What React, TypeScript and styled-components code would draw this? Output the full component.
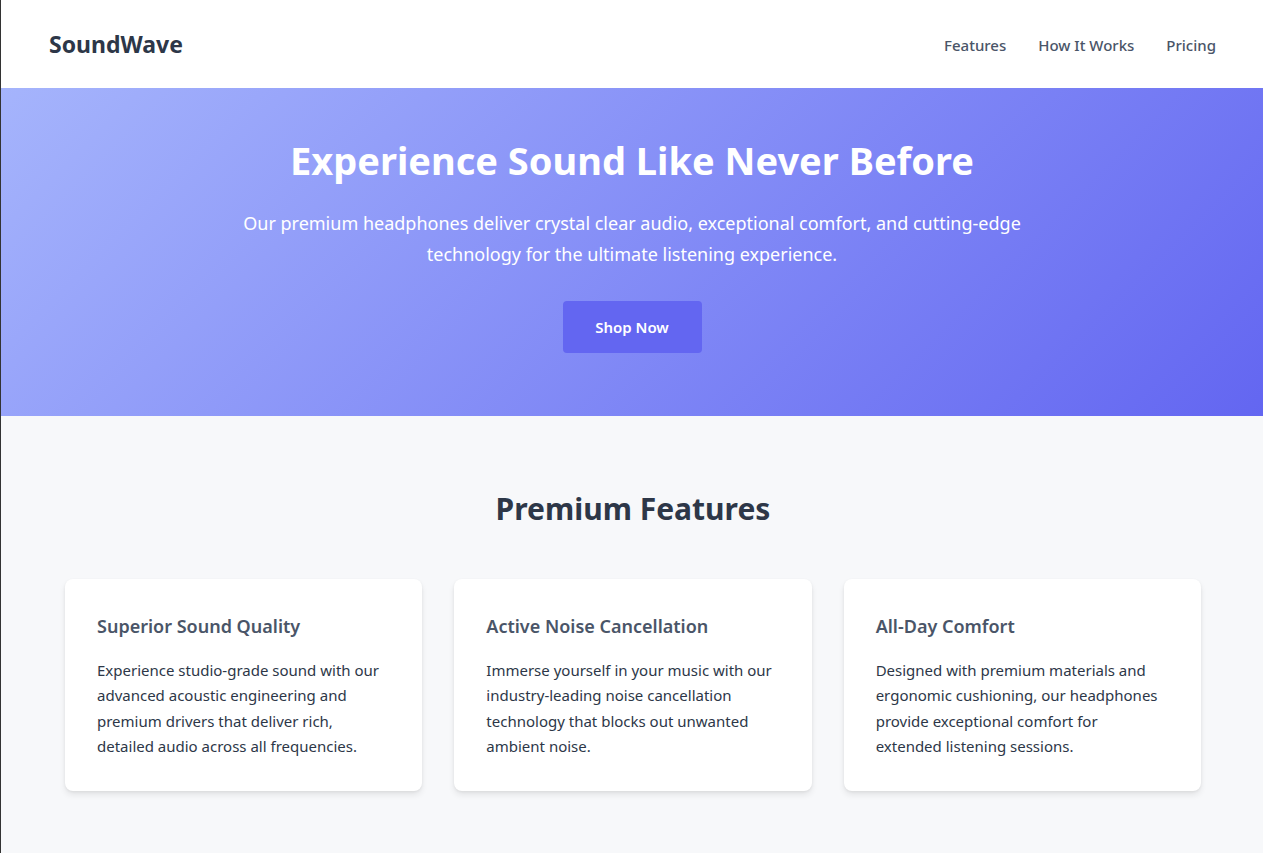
import React from "react";
import styled, { createGlobalStyle } from "styled-components";

const GlobalStyle = createGlobalStyle`
  * {
    box-sizing: border-box;
  }
  body {
    margin: 0;
    font-family: "Noto Sans", "Open Sans", sans-serif;
    background: #f7f8fa;
    color: #2d3748;
    line-height: 1.6;
  }
`;

// the whole page, with the thin dark edge on the left
const Page = styled.div`
  min-height: 853px;
  border-left: 1px solid #333;
  background: #f7f8fa;
`;

const Header = styled.header`
  display: flex;
  justify-content: space-between;
  align-items: center;
  height: 88px;
  padding: 1px 47px 0 48px;
  background: #fff;
`;

const Logo = styled.div`
  font-size: 23px;
  font-weight: 700;
  color: #2d3748;
`;

const Nav = styled.nav`
  display: flex;
  gap: 32px;
`;

const NavLink = styled.a`
  font-size: 15px;
  font-weight: 500;
  color: #4a5568;
  text-decoration: none;
`;

const Hero = styled.section`
  display: flex;
  flex-direction: column;
  align-items: center;
  height: 328px;
  padding-top: 48px;
  text-align: center;
  color: #fff;
  background: linear-gradient(135deg, #a5b4fc 0%, #6366f1 100%);
`;

const HeroTitle = styled.h1`
  margin: 0 0 23px;
  font-size: 38px;
  font-weight: 700;
  line-height: 1.3;
`;

const HeroText = styled.p`
  max-width: 800px;
  margin: 0 0 31px;
  font-size: 18px;
  line-height: 1.7;
`;

const Button = styled.button`
  width: 139px;
  height: 52px;
  border: none;
  border-radius: 4px;
  background: #6366f1;
  color: #fff;
  font-family: inherit;
  font-size: 15px;
  font-weight: 600;
  cursor: pointer;
`;

const Features = styled.section`
  max-width: 1200px;
  margin: 0 auto;
  padding: 73px 31px 64px 33px;
`;

const SectionTitle = styled.h2`
  margin: 0 0 51px;
  text-align: center;
  font-size: 30px;
  font-weight: 700;
  color: #2d3748;
  line-height: 1.3;
`;

const Grid = styled.div`
  display: grid;
  grid-template-columns: repeat(3, 1fr);
  gap: 32px;
`;

const Card = styled.div`
  height: 212px;
  padding: 33px 36px 33px 32px;
  border-radius: 8px;
  background: #fff;
  box-shadow: 0 4px 6px rgba(0, 0, 0, 0.08), 0 1px 3px rgba(0, 0, 0, 0.06);
`;

const CardTitle = styled.h3`
  margin: 0 0 17px;
  font-size: 18px;
  font-weight: 600;
  color: #4a5568;
  line-height: 1.6;
`;

const CardText = styled.p`
  margin: 0;
  font-size: 15px;
  line-height: 1.7;
  color: #2d3748;
`;

const features = [
  {
    title: "Superior Sound Quality",
    text: "Experience studio-grade sound with our advanced acoustic engineering and premium drivers that deliver rich, detailed audio across all frequencies.",
  },
  {
    title: "Active Noise Cancellation",
    text: "Immerse yourself in your music with our industry-leading noise cancellation technology that blocks out unwanted ambient noise.",
  },
  {
    title: "All-Day Comfort",
    text: "Designed with premium materials and ergonomic cushioning, our headphones provide exceptional comfort for extended listening sessions.",
  },
];

const App = () => {
  return (
    <>
      <GlobalStyle />
      <Page>
        <Header>
          <Logo>SoundWave</Logo>
          <Nav>
            <NavLink href="#features">Features</NavLink>
            <NavLink href="#how">How It Works</NavLink>
            <NavLink href="#pricing">Pricing</NavLink>
          </Nav>
        </Header>
        <Hero>
          <HeroTitle>Experience Sound Like Never Before</HeroTitle>
          <HeroText>
            Our premium headphones deliver crystal clear audio, exceptional comfort, and
            cutting-edge technology for the ultimate listening experience.
          </HeroText>
          <Button>Shop Now</Button>
        </Hero>
        <Features id="features">
          <SectionTitle>Premium Features</SectionTitle>
          <Grid>
            {features.map((f) => (
              <Card key={f.title}>
                <CardTitle>{f.title}</CardTitle>
                <CardText>{f.text}</CardText>
              </Card>
            ))}
          </Grid>
        </Features>
      </Page>
    </>
  );
};

export default App;
